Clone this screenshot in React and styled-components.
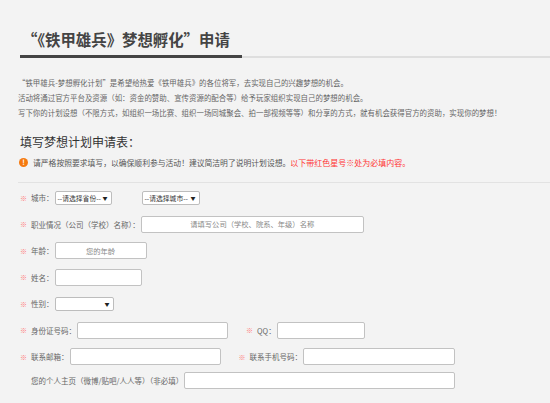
import React from 'react';
import styled, { createGlobalStyle } from 'styled-components';

const GlobalStyle = createGlobalStyle`
  html, body {
    margin: 0;
    padding: 0;
    background: #f3f3f3;
  }
  body {
    font-family: "Noto Sans CJK SC", "Noto Sans", sans-serif;
    color: #666;
  }
  #root {
    width: 550px;
    height: 403px;
    overflow: hidden;
  }
`;

const Page = styled.div`
  padding-top: 29px;
`;

const Header = styled.div`
  display: flex;
  align-items: flex-end;
  margin-left: 20px;
`;

const Title = styled.h1`
  margin: 0;
  padding: 0 12px 6px 2px;
  font-size: 15.4px;
  line-height: 20px;
  font-weight: bold;
  color: #444;
  border-bottom: 3px solid #444;
  white-space: nowrap;
`;

const HeaderRest = styled.div`
  flex: 1;
  border-bottom: 2px solid #dedede;
`;

const Content = styled.div`
  padding-left: 18px;
`;

const Intro = styled.div`
  margin-top: 17px;
`;

const IntroLine = styled.p`
  margin: 0;
  font-size: 7.45px;
  line-height: 15px;
  color: #666;
  white-space: nowrap;
`;

const SubTitle = styled.h2`
  margin: 13.5px 0 0 2px;
  font-size: 12px;
  line-height: 16px;
  font-weight: normal;
  color: #333;
`;

const Notice = styled.div`
  margin-top: 6px;
  display: flex;
  align-items: center;
  height: 14px;
  font-size: 7.8px;
  color: #555;
  white-space: nowrap;
`;

const NoticeIcon = styled.span`
  display: inline-flex;
  align-items: center;
  justify-content: center;
  width: 9px;
  height: 9px;
  margin: 0 5px 0 1px;
  border-radius: 50%;
  background: #f57a10;
  color: #fff;
  font-size: 7px;
  font-weight: bold;
  line-height: 1;
`;

const Required = styled.span`
  color: #f33;
  font-size: 8px;
`;

const Divider = styled.div`
  margin-top: 12px;
  border-top: 1px solid #e2e2e2;
`;

const Form = styled.div`
  padding: 2px 0 0 2px;
`;

const Row = styled.div`
  display: flex;
  align-items: center;
  height: ${p => p.$h || 26.5}px;
`;

const Star = styled.span`
  width: 11px;
  margin-left: ${p => p.$gap || 0}px;
  color: #f77;
  font-size: 7px;
  flex-shrink: 0;
`;

const Label = styled.span`
  font-size: 7.5px;
  color: #666;
  white-space: nowrap;
  margin-left: ${p => p.$indent || 0}px;
  margin-right: 1px;
`;

const Field = styled.input`
  box-sizing: border-box;
  width: ${p => p.$w}px;
  height: 17px;
  margin: 0;
  padding: 0 4px;
  border: 1px solid #c2c2c2;
  border-radius: 2px;
  background: #fff;
  font-family: inherit;
  font-size: 7.3px;
  color: #555;
  text-align: center;
  outline: none;
  &::placeholder {
    color: #888;
  }
`;

const Select = styled.div`
  box-sizing: border-box;
  display: flex;
  align-items: center;
  justify-content: space-between;
  width: ${p => p.$w}px;
  height: 14px;
  margin-left: ${p => p.$gap || 0}px;
  padding: 0 3px 0 2px;
  border: 1px solid #bdbdbd;
  border-radius: 2px;
  background: #fff;
  font-size: 6.8px;
  color: #333;
  white-space: nowrap;
`;

const Arrow = styled.span`
  font-size: 5px;
  color: #222;
`;

export default function App() {
  return (
    <Page>
      <GlobalStyle />
      <Header>
        <Title>“《铁甲雄兵》梦想孵化”申请</Title>
        <HeaderRest />
      </Header>
      <Content>
        <Intro>
          <IntroLine>“铁甲雄兵-梦想孵化计划”是希望给热爱《铁甲雄兵》的各位将军，去实现自己的兴趣梦想的机会。</IntroLine>
          <IntroLine>活动将通过官方平台及资源（如：资金的赞助、宣传资源的配合等）给予玩家组织实现自己的梦想的机会。</IntroLine>
          <IntroLine>写下你的计划设想（不限方式，如组织一场比赛、组织一场同城聚会、拍一部视频等等）和分享的方式，就有机会获得官方的资助，实现你的梦想！</IntroLine>
        </Intro>
        <SubTitle>填写梦想计划申请表：</SubTitle>
        <Notice>
          <NoticeIcon>!</NoticeIcon>
          请严格按照要求填写，以确保顺利参与活动！建议简洁明了说明计划设想。
          <Required>以下带红色星号※处为必填内容。</Required>
        </Notice>
        <Divider />
        <Form>
          <Row>
            <Star>※</Star>
            <Label>城市：</Label>
            <Select $w={57}>--请选择省份--<Arrow>▼</Arrow></Select>
            <Select $w={58} $gap={30}>--请选择城市--<Arrow>▼</Arrow></Select>
          </Row>
          <Row>
            <Star>※</Star>
            <Label>职业情况（公司（学校）名称）：</Label>
            <Field $w={223} placeholder="请填写公司（学校、院系、年级）名称" />
          </Row>
          <Row>
            <Star>※</Star>
            <Label>年龄：</Label>
            <Field $w={92} placeholder="您的年龄" />
          </Row>
          <Row>
            <Star>※</Star>
            <Label>姓名：</Label>
            <Field $w={87} />
          </Row>
          <Row>
            <Star>※</Star>
            <Label>性别：</Label>
            <Select $w={59}><span /><Arrow>▼</Arrow></Select>
          </Row>
          <Row>
            <Star>※</Star>
            <Label>身份证号码：</Label>
            <Field $w={151} />
            <Star $gap={18}>※</Star>
            <Label>QQ：</Label>
            <Field $w={88} />
          </Row>
          <Row>
            <Star>※</Star>
            <Label>联系邮箱：</Label>
            <Field $w={151} />
            <Star $gap={18}>※</Star>
            <Label>联系手机号码：</Label>
            <Field $w={152} />
          </Row>
          <Row $h={20}>
            <Label $indent={11}>您的个人主页（微博/贴吧/人人等）（非必填）</Label>
            <Field $w={271} />
          </Row>
        </Form>
      </Content>
    </Page>
  );
}
